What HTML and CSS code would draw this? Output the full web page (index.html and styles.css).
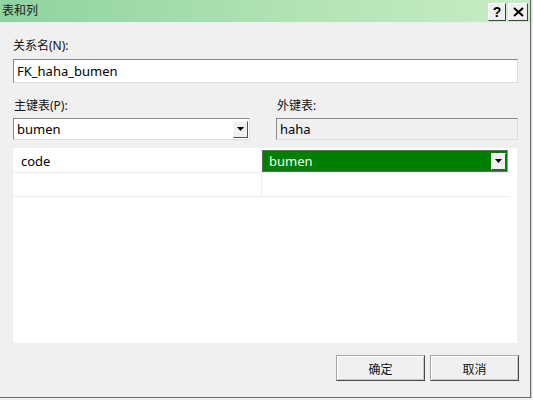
FILE: index.html
```html
<!DOCTYPE html>
<html lang="zh-CN">
<head>
<meta charset="utf-8">
<title>表和列</title>
<link rel="stylesheet" href="styles.css">
</head>
<body>
<div class="window">
  <div class="titlebar">
    <span class="title">表和列</span>
    <div class="tb-buttons">
      <span class="tb-btn help">?</span>
      <span class="tb-btn close">
        <svg width="11" height="10" viewBox="0 0 11 10"><path d="M1 1 L10 9 M10 1 L1 9" stroke="#000" stroke-width="2"/></svg>
      </span>
    </div>
  </div>
  <div class="content">
    <div class="label first">关系名(N):</div>
    <div class="textbox name">FK_haha_bumen</div>
    <div class="pair">
      <div class="col left">
        <div class="label">主键表(P):</div>
        <div class="combo">
          <span class="combo-text">bumen</span>
          <span class="drop"><svg width="7" height="4" viewBox="0 0 7 4"><path d="M0 0 H7 L3.5 4 Z" fill="#000"/></svg></span>
        </div>
      </div>
      <div class="col right">
        <div class="label">外键表:</div>
        <div class="textbox readonly">haha</div>
      </div>
    </div>
    <div class="grid">
      <div class="row">
        <div class="cell c1">code</div>
        <div class="cell c2">
          <div class="gcombo">
            <span class="gcombo-text">bumen</span>
            <span class="drop"><svg width="7" height="4" viewBox="0 0 7 4"><path d="M0 0 H7 L3.5 4 Z" fill="#000"/></svg></span>
          </div>
        </div>
      </div>
      <div class="row">
        <div class="cell c1"></div>
        <div class="cell c2"></div>
      </div>
    </div>
    <div class="actions">
      <button class="btn">确定</button>
      <button class="btn">取消</button>
    </div>
  </div>
</div>
</body>
</html>
```
FILE: styles.css
```css
html, body {
  margin: 0;
  padding: 0;
  background: #f0f0f0;
}
body {
  font-family: "Noto Sans", "Noto Sans CJK SC", sans-serif;
  font-size: 12px;
  color: #000;
}
.window {
  width: 530px;
  height: 397px;
  background: #f0f0f0;
  border-right: 1px solid #6a6a6a;
  border-bottom: 1px solid #6a6a6a;
  box-shadow: 1px 1px 0 #d8d8d8;
  display: flex;
  flex-direction: column;
}
.titlebar {
  height: 22px;
  background: linear-gradient(to right, #8fd3a0, #b4e4b6 60%, #c8edc6);
  display: flex;
  align-items: center;
  justify-content: space-between;
  padding: 0 2px 0 2px;
  border-bottom: 1px solid #e6f3e6;
}
.title {
  font-size: 12px;
  color: #1a1a1a;
  line-height: 22px;
}
.tb-buttons {
  display: flex;
  gap: 2px;
  margin-top: 1px;
}
.tb-btn {
  width: 16px;
  height: 16px;
  background: #f0f0f0;
  border: 1px solid;
  border-color: #fff #404040 #404040 #fff;
  display: flex;
  align-items: center;
  justify-content: center;
  font-family: "Liberation Sans", sans-serif;
  font-weight: bold;
  font-size: 14px;
  line-height: 16px;
}
.tb-btn.close {
  width: 18px;
}
.content {
  padding: 0 12px 0 13px;
  display: flex;
  flex-direction: column;
}
.label {
  height: 14px;
  line-height: 14px;
  color: #111;
}
.label.first {
  margin-top: 16px;
}
.textbox {
  box-sizing: border-box;
  background: #fff;
  border: 1px solid;
  border-color: #8a8a8a #dcdcdc #dcdcdc #8a8a8a;
  padding-left: 3px;
  display: flex;
  align-items: center;
}
.textbox.name {
  margin-top: 6px;
  height: 24px;
  font-size: 13px;
}
.pair {
  display: flex;
  justify-content: space-between;
  margin-top: 16px;
}
.col {
  display: flex;
  flex-direction: column;
}
.col .label {
  margin-bottom: 5px;
  padding-left: 1px;
}
.col.left {
  width: 237px;
}
.col.right {
  width: 242px;
}
.combo {
  box-sizing: border-box;
  height: 22px;
  background: #fff;
  border: 1px solid;
  border-color: #8a8a8a #dcdcdc #dcdcdc #8a8a8a;
  display: flex;
  align-items: center;
  justify-content: space-between;
  padding: 0 1px 0 3px;
  font-size: 13px;
}
.drop {
  box-sizing: border-box;
  width: 15px;
  height: 17px;
  background: #f0f0f0;
  border: 1px solid;
  border-color: #f8f8f8 #505050 #505050 #f8f8f8;
  display: flex;
  align-items: center;
  justify-content: center;
}
.textbox.readonly {
  height: 22px;
  background: #f0f0f0;
  font-size: 13px;
}
.grid {
  margin-top: 8px;
  height: 195px;
  width: 504px;
  background: #fff;
  display: flex;
  flex-direction: column;
  padding-top: 1px;
  box-sizing: border-box;
}
.row {
  display: flex;
  height: 23px;
  border-bottom: 1px solid #eeeeee;
  width: 497px;
}
.cell {
  box-sizing: border-box;
  height: 23px;
  display: flex;
  align-items: center;
}
.cell.c1 {
  width: 249px;
  border-right: 1px solid #eeeeee;
  padding-left: 8px;
  font-size: 13px;
}
.cell.c2 {
  width: 248px;
  padding-top: 1px;
}
.gcombo {
  box-sizing: border-box;
  width: 246px;
  height: 22px;
  background: #008000;
  border: 1px solid;
  border-color: #6a6a6a #9a9a9a #6a6a6a #6a6a6a;
  display: flex;
  align-items: center;
  justify-content: space-between;
  padding: 0 1px 0 6px;
  color: #f4fff4;
  font-size: 13px;
}
.actions {
  display: flex;
  justify-content: flex-end;
  gap: 5px;
  margin-top: 12px;
}
.btn {
  box-sizing: border-box;
  width: 89px;
  height: 26px;
  background: #f0f0f0;
  border: 1px solid;
  border-color: #a8a8a8 #4a4a4a #4a4a4a #a8a8a8;
  box-shadow: inset 1px 1px 0 #ffffff, inset -1px -1px 0 #c8c8c8;
  font-family: "Noto Sans CJK SC", sans-serif;
  font-size: 12px;
  color: #111;
  padding: 0;
  margin: 0;
}
.btn:last-child {
  margin-right: -1px;
}
```
